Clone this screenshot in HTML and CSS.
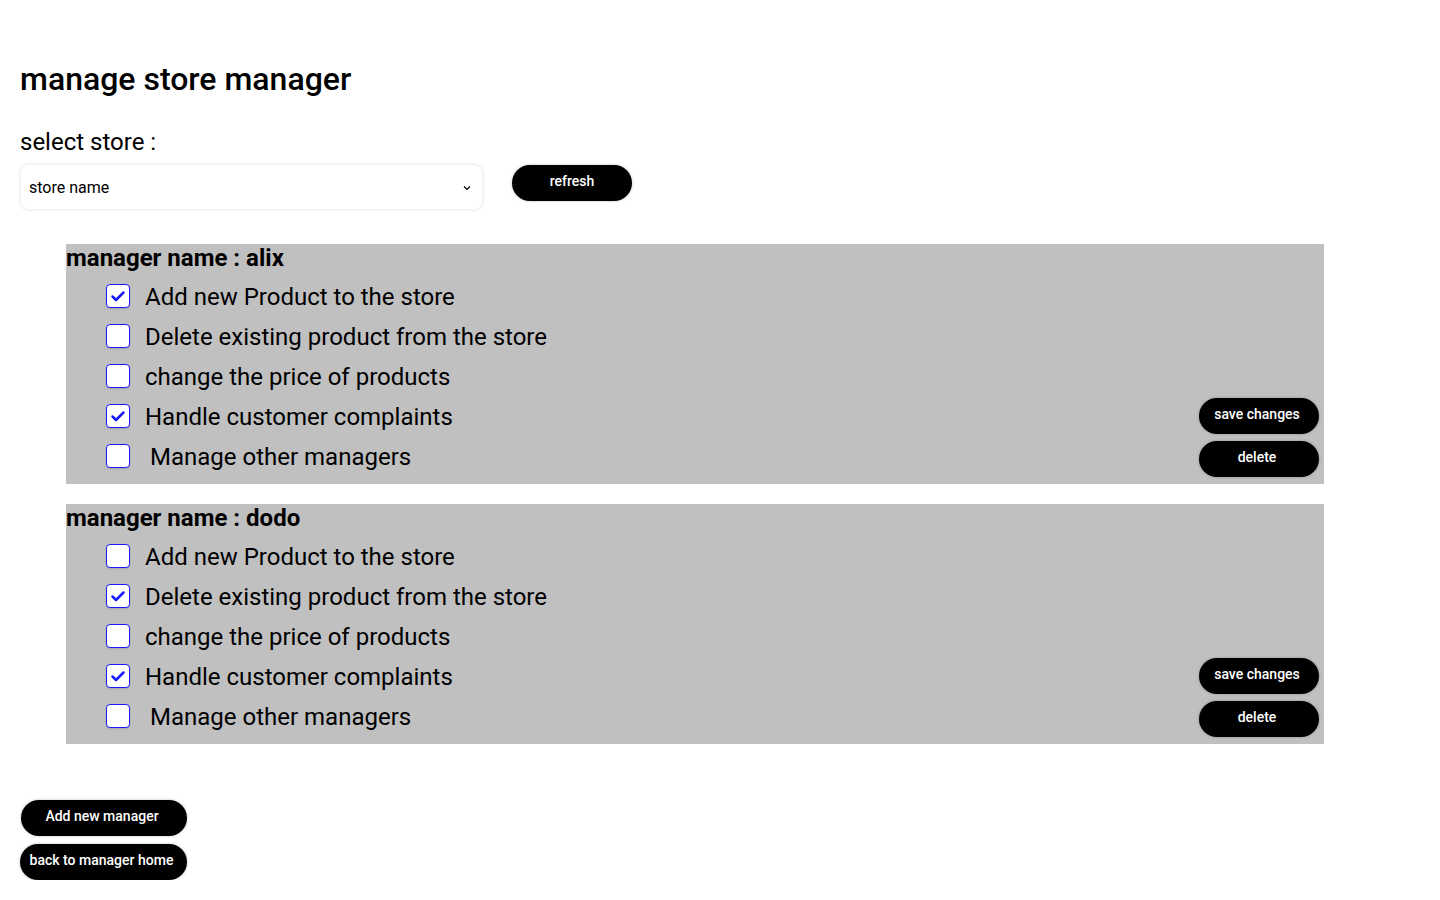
FILE: index.html
```html
<!DOCTYPE html>
<html>
<head>
<meta charset="utf-8">
<link rel="stylesheet" href="styles.css">
</head>
<body>
<div class="page">
  <h1 class="title">manage store manager</h1>
  <div class="select-label">select store :</div>
  <div class="select-row">
    <div class="select-box">
      <span>store name</span>
      <svg class="chev" width="8" height="6" viewBox="0 0 8 6"><path d="M1 1.5 L4 4.5 L7 1.5" fill="none" stroke="#000" stroke-width="1.2"/></svg>
    </div>
    <button class="btn btn-refresh">refresh</button>
  </div>

  <div class="panels">
    <div class="panel">
      <div class="panel-main">
        <div class="manager-name">manager name : alix</div>
        <div class="perm"><span class="cb checked"><svg viewBox="0 0 24 24" width="24" height="24"><path d="M6.5 12.5 L10 16 L17.5 8.5" fill="none" stroke="#1a1aff" stroke-width="2.5" stroke-linecap="round" stroke-linejoin="round"/></svg></span><span class="perm-text">Add new Product to the store</span></div>
        <div class="perm"><span class="cb"></span><span class="perm-text">Delete existing product from the store</span></div>
        <div class="perm"><span class="cb"></span><span class="perm-text">change the price of products</span></div>
        <div class="perm"><span class="cb checked"><svg viewBox="0 0 24 24" width="24" height="24"><path d="M6.5 12.5 L10 16 L17.5 8.5" fill="none" stroke="#1a1aff" stroke-width="2.5" stroke-linecap="round" stroke-linejoin="round"/></svg></span><span class="perm-text">Handle customer complaints</span></div>
        <div class="perm"><span class="cb"></span><span class="perm-text indent">Manage other managers</span></div>
      </div>
      <div class="panel-actions">
        <button class="btn btn-small">save changes</button>
        <button class="btn btn-small">delete</button>
      </div>
    </div>

    <div class="panel">
      <div class="panel-main">
        <div class="manager-name">manager name : dodo</div>
        <div class="perm"><span class="cb"></span><span class="perm-text">Add new Product to the store</span></div>
        <div class="perm"><span class="cb checked"><svg viewBox="0 0 24 24" width="24" height="24"><path d="M6.5 12.5 L10 16 L17.5 8.5" fill="none" stroke="#1a1aff" stroke-width="2.5" stroke-linecap="round" stroke-linejoin="round"/></svg></span><span class="perm-text">Delete existing product from the store</span></div>
        <div class="perm"><span class="cb"></span><span class="perm-text">change the price of products</span></div>
        <div class="perm"><span class="cb checked"><svg viewBox="0 0 24 24" width="24" height="24"><path d="M6.5 12.5 L10 16 L17.5 8.5" fill="none" stroke="#1a1aff" stroke-width="2.5" stroke-linecap="round" stroke-linejoin="round"/></svg></span><span class="perm-text">Handle customer complaints</span></div>
        <div class="perm"><span class="cb"></span><span class="perm-text indent">Manage other managers</span></div>
      </div>
      <div class="panel-actions">
        <button class="btn btn-small">save changes</button>
        <button class="btn btn-small">delete</button>
      </div>
    </div>
  </div>

  <div class="bottom-actions">
    <button class="btn btn-bottom btn-add">Add new manager</button>
    <button class="btn btn-bottom">back to manager home</button>
  </div>
</div>
</body>
</html>
```

FILE: styles.css
```css
* { box-sizing: border-box; }
html, body { margin: 0; padding: 0; background: #fff; }
body { font-family: Roboto, "Noto Sans", Arial, sans-serif; color: #000; }

.page { padding: 60px 20px 0 20px; }

.title {
  margin: 0;
  font-size: 32px;
  font-weight: 500;
  line-height: 38px;
}

.select-label {
  margin-top: 30px;
  font-size: 24px;
  line-height: 28px;
}

.select-row {
  margin-top: 9px;
  display: flex;
  align-items: flex-start;
  gap: 30px;
}

.select-box {
  margin-left: 1px;
  width: 461px;
  height: 44px;
  background: #fff;
  border-radius: 8px;
  box-shadow: 0 0 4px rgba(0,0,0,0.15);
  display: flex;
  align-items: center;
  justify-content: space-between;
  padding: 0 11px 0 8px;
  font-size: 16px;
}
.chev { margin-top: 2px; }

.btn {
  border: none;
  background: #000;
  color: #fff;
  font-family: Roboto, "Noto Sans", Arial, sans-serif;
  font-size: 14px;
  font-weight: 500;
  border-radius: 18px;
  height: 36px;
  cursor: pointer;
  box-shadow: 0 0 3px rgba(0,0,0,0.25);
  padding: 0 4px 4px 0;
}
.btn-refresh { width: 120px; padding: 0 0 4px 0; }

.panels {
  margin-top: 35px;
  margin-left: 46px;
  display: flex;
  flex-direction: column;
  gap: 20px;
}

.panel {
  width: 1258px;
  height: 240px;
  background: #c0c0c0;
  display: flex;
  justify-content: space-between;
  padding: 0 5px 7px 0;
}

.panel-main { display: flex; flex-direction: column; }

.manager-name {
  font-size: 24px;
  font-weight: 700;
  line-height: 28px;
  margin-bottom: 4px;
}

.perm {
  height: 40px;
  display: flex;
  align-items: center;
  padding-left: 40px;
}

.cb {
  width: 24px;
  height: 24px;
  flex: none;
  background: #fff;
  border: 1.5px solid #1a1aff;
  border-radius: 4px;
  box-shadow: 0 1px 2px rgba(0,0,0,0.15);
  display: flex;
  align-items: center;
  justify-content: center;
  overflow: hidden;
}
.cb svg { flex: none; }

.perm-text {
  margin-left: 15px;
  font-size: 24px;
  line-height: 28px;
  padding-top: 2px;
}
.perm-text.indent { margin-left: 20px; }

.panel-actions {
  display: flex;
  flex-direction: column;
  justify-content: flex-end;
  gap: 7px;
}
.btn-small { width: 120px; }

.bottom-actions {
  margin-top: 56px;
  display: flex;
  flex-direction: column;
  align-items: flex-start;
  gap: 8px;
}
.btn-bottom { width: 167px; }
.btn-add { margin-left: 1px; width: 166px; }
```
